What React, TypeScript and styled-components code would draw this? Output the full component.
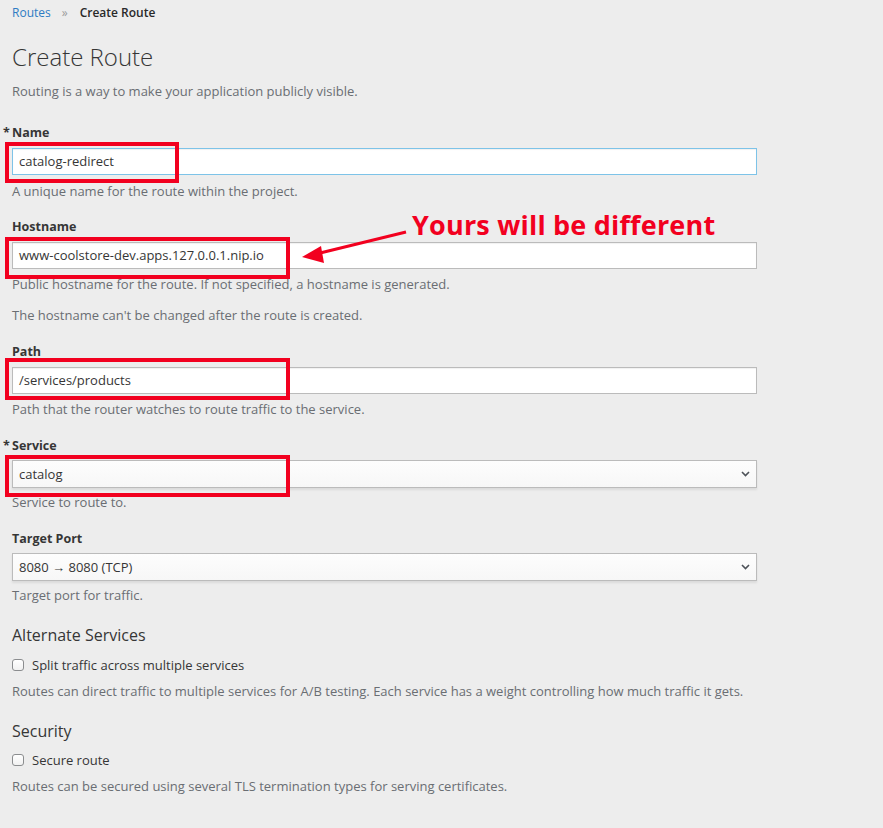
import React from "react";
import styled, { createGlobalStyle } from "styled-components";

const Global = createGlobalStyle`
  html, body { margin: 0; padding: 0; background: #ededed; }
  body { font-family: "Open Sans", "Noto Sans", sans-serif; font-size: 13px; color: #363636; }
  * { box-sizing: border-box; }
`;

const Page = styled.div`
  padding: 0 12px;
  width: 883px;
  min-height: 828px;
  position: relative;
`;

const Breadcrumb = styled.div`
  display: flex;
  align-items: center;
  height: 26px;
  line-height: 26px;
  font-size: 12px;
`;

const Crumb = styled.a`
  color: #2e7cc3;
  text-decoration: none;
`;

const Sep = styled.span`
  color: #9c9c9c;
  margin: 0 12px 0 11px;
  font-size: 12px;
`;

const Current = styled.span`
  color: #292929;
  font-weight: 600;
`;

const Title = styled.h1`
  margin: 16px 0 0;
  font-size: 24px;
  line-height: 30px;
  font-weight: 300;
  color: #363636;
`;

const Lead = styled.p`
  margin: 9px 0 0;
  line-height: 20px;
  color: #6a6e73;
`;

const Group = styled.div<{ $mt: number }>`
  position: relative;
  margin-top: ${(p) => p.$mt}px;
  width: 745px;
`;

const Label = styled.label<{ $required?: boolean }>`
  display: block;
  position: relative;
  font-weight: 700;
  font-size: 12.5px;
  line-height: 16px;
  color: #363636;
  &::before {
    content: ${(p) => (p.$required ? '"*"' : "none")};
    position: absolute;
    left: -9px;
    top: 0;
    font-weight: 700;
  }
`;

const Input = styled.div<{ $focus?: boolean }>`
  margin-top: 7px;
  height: 27px;
  border: 1px solid ${(p) => (p.$focus ? "#7dc3e8" : "#bbbbbb")};
  background: #fff;
  padding: 0 6px;
  line-height: 25px;
  color: #363636;
  box-shadow: inset 0 1px 1px rgba(3, 3, 3, 0.06);
`;

const Select = styled.div`
  margin-top: 6px;
  height: 28px;
  border: 1px solid #bbbbbb;
  background: linear-gradient(#fdfdfd, #f7f7f7);
  padding: 0 6px;
  display: flex;
  align-items: center;
  justify-content: space-between;
  line-height: 26px;
  color: #363636;
  box-shadow: 0 2px 2px rgba(3, 3, 3, 0.08);
`;

const Help = styled.div<{ $mt?: number }>`
  margin-top: ${(p) => p.$mt ?? 5}px;
  line-height: 20px;
  color: #6a6e73;
`;

const Heading = styled.h3<{ $mt: number }>`
  margin: ${(p) => p.$mt}px 0 0;
  font-size: 16px;
  line-height: 22px;
  font-weight: 400;
  color: #363636;
`;

const CheckRow = styled.label<{ $mt: number }>`
  display: flex;
  align-items: center;
  margin-top: ${(p) => p.$mt}px;
  line-height: 20px;
  color: #363636;
`;

const Box = styled.span`
  width: 12px;
  height: 12px;
  border: 1px solid #8b8d8f;
  border-radius: 3px;
  background: linear-gradient(#ffffff, #f1f1f1);
  margin-right: 8px;
  flex: none;
`;

const Mark = styled.div<{ $w: number; $h: number; $l: number; $t: number }>`
  position: absolute;
  left: ${(p) => p.$l}px;
  top: ${(p) => p.$t}px;
  width: ${(p) => p.$w}px;
  height: ${(p) => p.$h}px;
  border: 4px solid #f2001f;
  pointer-events: none;
`;

const Callout = styled.div`
  position: absolute;
  left: 412px;
  top: 206px;
  font-family: "Open Sans", sans-serif;
  font-weight: 700;
  font-size: 27px;
  line-height: 38px;
  color: #f2001f;
  letter-spacing: 0.2px;
  white-space: nowrap;
`;

const ArrowSvg = styled.svg`
  position: absolute;
  left: 298px;
  top: 228px;
`;

const Chevron = () => (
  <svg width="9" height="6" viewBox="0 0 9 6">
    <path d="M1 1 L4.5 4.5 L8 1" fill="none" stroke="#4d5258" strokeWidth="1.6" />
  </svg>
);

export default function App() {
  return (
    <>
      <Global />
      <Page>
        <Breadcrumb>
          <Crumb href="#">Routes</Crumb>
          <Sep>»</Sep>
          <Current>Create Route</Current>
        </Breadcrumb>
        <Title>Create Route</Title>
        <Lead>Routing is a way to make your application publicly visible.</Lead>

        <Group $mt={24}>
          <Label $required>Name</Label>
          <Input $focus>catalog-redirect</Input>
          <Help $mt={6}>A unique name for the route within the project.</Help>
          <Mark $l={-7} $t={17} $w={174} $h={41} />
        </Group>

        <Group $mt={18}>
          <Label>Hostname</Label>
          <Input>www-coolstore-dev.apps.127.0.0.1.nip.io</Input>
          <Help $mt={5}>Public hostname for the route. If not specified, a hostname is generated.</Help>
          <Help $mt={11}>The hostname can't be changed after the route is created.</Help>
          <Mark $l={-7} $t={18} $w={285} $h={42} />
        </Group>

        <Group $mt={19}>
          <Label>Path</Label>
          <Input>/services/products</Input>
          <Help $mt={5}>Path that the router watches to route traffic to the service.</Help>
          <Mark $l={-7} $t={14} $w={285} $h={42} />
        </Group>

        <Group $mt={19}>
          <Label $required>Service</Label>
          <Select>
            <span>catalog</span>
            <Chevron />
          </Select>
          <Help $mt={4}>Service to route to.</Help>
          <Mark $l={-7} $t={17} $w={285} $h={42} />
        </Group>

        <Group $mt={19}>
          <Label>Target Port</Label>
          <Select>
            <span>8080 → 8080 (TCP)</span>
            <Chevron />
          </Select>
          <Help $mt={4}>Target port for traffic.</Help>
        </Group>

        <Heading $mt={19}>Alternate Services</Heading>
        <CheckRow $mt={9}>
          <Box />
          Split traffic across multiple services
        </CheckRow>
        <Help $mt={6}>
          Routes can direct traffic to multiple services for A/B testing. Each service has a weight controlling how much traffic it gets.
        </Help>

        <Heading $mt={19}>Security</Heading>
        <CheckRow $mt={8}>
          <Box />
          Secure route
        </CheckRow>
        <Help $mt={6}>Routes can be secured using several TLS termination types for serving certificates.</Help>

        <Callout>Yours will be different</Callout>
        <ArrowSvg width="120" height="40" viewBox="0 0 120 40">
          <line x1="108" y1="4" x2="18" y2="26" stroke="#f2001f" strokeWidth="3" />
          <polygon points="4,29 23,18 26,35" fill="#f2001f" />
        </ArrowSvg>
      </Page>
    </>
  );
}
